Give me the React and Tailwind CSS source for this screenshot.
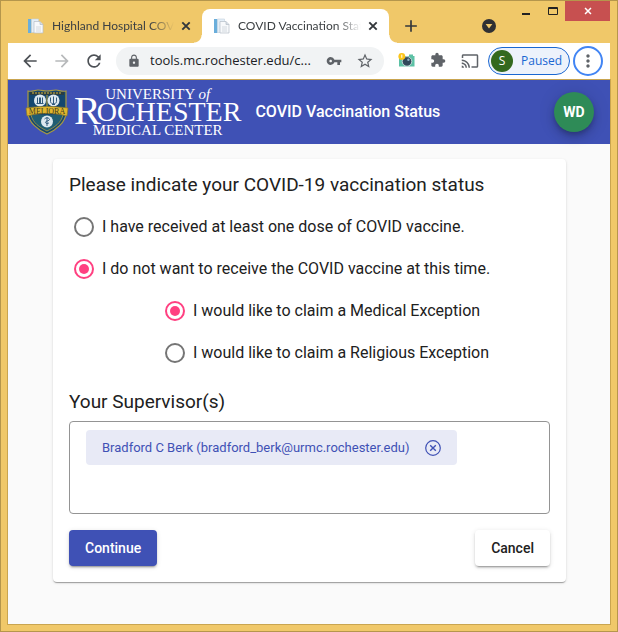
import { useState } from 'react';
import { MdArrowBack, MdArrowForward, MdRefresh, MdLock, MdVpnKey, MdStarBorder, MdExtension, MdCast, MdMoreVert, MdAdd } from 'react-icons/md';

const TABS = [
  { id: 'highland', title: 'Highland Hospital COVID Vaccine' },
  { id: 'status', title: 'COVID Vaccination Status' },
];

function PageIcon() {
  return (
    <svg viewBox="0 0 16 16" className="w-4 h-4 mr-2 shrink-0" aria-hidden="true">
      <rect x="0" y="1" width="3.5" height="14" fill="#6aaedb" />
      <path d="M3.5 1h7v13.5h-7z" fill="#e4eef7" stroke="#c3d1de" strokeWidth=".6" />
      <path d="M6 3.5h6l3 3V15H6z" fill="#f7f9fb" stroke="#b4bdc7" strokeWidth=".7" />
      <path d="M12 3.5v3h3" fill="#d6dde4" stroke="#b4bdc7" strokeWidth=".7" />
      <path d="M8 9h5M8 11h5M8 13h5" stroke="#c3ccd4" strokeWidth=".7" />
    </svg>
  );
}

function CloseGlyph({ className }) {
  return (
    <svg viewBox="0 0 10 10" className={className} aria-hidden="true">
      <path d="M1.3 1.3l7.4 7.4M8.7 1.3L1.3 8.7" stroke="currentColor" strokeWidth="1.9" />
    </svg>
  );
}

function Tab({ title, active }) {
  return (
    <div className={active ? 'relative flex items-center w-[187px] pl-3 pr-2 bg-white rounded-t-lg' : 'relative flex items-center w-[186px] pl-3 pr-2'}>
      {active && (
        <>
          <span className="absolute -left-2 bottom-0 w-2 h-2 bg-[radial-gradient(circle_at_0_0,transparent_7px,white_8px)]" />
          <span className="absolute -right-2 bottom-0 w-2 h-2 bg-[radial-gradient(circle_at_100%_0,transparent_7px,white_8px)]" />
        </>
      )}
      <PageIcon />
      <span className="flex-1 overflow-hidden whitespace-nowrap font-['Lato',sans-serif] text-xs text-[#3c4043] [mask-image:linear-gradient(to_right,black_80%,transparent)]">{title}</span>
      <button aria-label={`Close ${title}`} className="ml-1 w-4 h-4 flex items-center justify-center text-[#33373b]">
        <CloseGlyph className="w-[10px] h-[10px]" />
      </button>
    </div>
  );
}

function TitleBar() {
  return (
    <div className="flex h-[42px]">
      <div className="flex ml-2 pt-2">
        {TABS.map((t) => <Tab key={t.id} title={t.title} active={t.id === 'status'} />)}
        <button aria-label="New tab" className="ml-3 w-5 flex items-center justify-center text-[#33373b]">
          <MdAdd className="w-5 h-5" />
        </button>
      </div>
      <div className="flex-1 flex items-center justify-end pt-2 pr-[25px]">
        <button aria-label="Search tabs" className="w-[14px] h-[14px] rounded-full bg-[#2f3033] flex items-center justify-center">
          <svg viewBox="0 0 8 8" className="w-2 h-2" aria-hidden="true"><path d="M.6 2h6.8L4 6.4z" fill="#f0c869" /></svg>
        </button>
      </div>
      <div className="flex items-start text-[#222]">
        <button aria-label="Minimize" className="w-3 h-5 flex items-center justify-center">
          <svg viewBox="0 0 12 20" className="w-3 h-5" aria-hidden="true"><path d="M1 12h8v2H1z" fill="currentColor" /></svg>
        </button>
        <button aria-label="Maximize" className="w-8 h-5 flex items-center justify-center">
          <svg viewBox="0 0 32 20" className="w-8 h-5" aria-hidden="true"><path d="M15.5 6.5h9v7h-9z M15 7.5h10" fill="none" stroke="currentColor" /></svg>
        </button>
        <button aria-label="Close window" className="w-[45px] h-5 bg-[#c75050] text-white flex items-center justify-center">
          <CloseGlyph className="w-2 h-2" />
        </button>
      </div>
    </div>
  );
}

function CameraIcon() {
  return (
    <svg viewBox="0 0 17 16" className="w-[17px] h-4" aria-hidden="true">
      <rect x="1" y="4" width="15.5" height="10.5" fill="#5cc1a5" />
      <rect x="11" y="2.5" width="4" height="2" fill="#5cc1a5" />
      <circle cx="9" cy="9.4" r="4.8" fill="#31485a" stroke="#dfe8ea" strokeWidth=".8" />
      <circle cx="10.4" cy="7.8" r="1.2" fill="#8fb3c4" />
      <circle cx="3.8" cy="4.4" r="3.4" fill="#fcc419" />
      <path d="M3.8 2.6v3.2" stroke="#fff" strokeWidth="1" />
    </svg>
  );
}

function Toolbar() {
  return (
    <div className="flex items-center h-[37px] pl-[6px] pr-[7px] bg-white border-b border-[#d5d6d9] text-[#5f6368]">
      <button aria-label="Back" className="w-8 flex justify-center text-[#4d5156]"><MdArrowBack className="w-5 h-5" /></button>
      <button aria-label="Forward" className="w-8 flex justify-center text-[#b7b9bb]"><MdArrowForward className="w-5 h-5" /></button>
      <button aria-label="Reload" className="w-8 flex justify-center text-[#4d5156]"><MdRefresh className="w-5 h-5" /></button>
      <div className="flex-1 min-w-0 flex items-center h-7 ml-[6px] px-[10px] rounded-full bg-[#f1f3f4]">
        <MdLock className="w-4 h-[14px] shrink-0" />
        <input
          aria-label="Address"
          defaultValue="tools.mc.rochester.edu/c..."
          className="flex-1 min-w-0 ml-2 bg-transparent text-[13px] text-[#202124] focus:outline-none"
        />
        <button aria-label="Saved passwords"><MdVpnKey className="w-4 h-4" /></button>
        <button aria-label="Bookmark this page" className="ml-[14px]"><MdStarBorder className="w-[18px] h-[18px]" /></button>
      </div>
      <div className="flex ml-[6px]">
        <button aria-label="Camera extension" className="w-8 flex justify-center"><CameraIcon /></button>
        <button aria-label="Extensions" className="w-8 flex justify-center"><MdExtension className="w-4 h-4" /></button>
        <button aria-label="Cast" className="w-8 flex justify-center"><MdCast className="w-[18px] h-[18px]" /></button>
      </div>
      <button className="flex items-center w-[82px] h-7 ml-[2px] pl-[2px] rounded-full border border-[#1a67d2] bg-[#edf2fb] text-xs text-[#1a67d2]">
        <span className="w-[22px] h-[22px] rounded-full bg-[#33691e] text-white flex items-center justify-center">S</span>
        <span className="ml-2">Paused</span>
      </button>
      <button aria-label="Menu" className="w-[30px] h-[30px] ml-[3px] rounded-full border-2 border-[#4285f4] flex items-center justify-center">
        <MdMoreVert className="w-5 h-5" />
      </button>
    </div>
  );
}

function Crest() {
  return (
    <svg viewBox="0 0 44 46" className="w-11 h-[46px] shrink-0" aria-hidden="true">
      <path d="M3 2c4 1 7-1 10-1 4 0 6 1 9 1s5-1 9-1c3 0 6 2 10 1v22c0 9-10 17-19 21C13 41 3 33 3 24z" fill="#14476f" stroke="#a99a42" strokeWidth="1.2" />
      <path d="M5 3h34v3H5z" fill="#293d42" />
      <path d="M7 4h30" stroke="#d6b83d" strokeWidth="1" strokeDasharray="2 1" />
      <path d="M22 6v12" stroke="#bda43c" />
      <path d="M6 26c2 8 8 12 16 16 8-4 14-8 16-16" fill="#205d72" stroke="#a99a42" strokeWidth=".8" />
      <circle cx="15" cy="11.5" r="6" fill="#dce8ef" />
      <path d="M12.5 8.5v6h2v-6m1 0v6h2v-6M11.5 14.5h7" fill="none" stroke="#315b7d" />
      <circle cx="28.5" cy="11.5" r="6" fill="#dce8ef" />
      <path d="M25.5 8.5v4c0 3 6 3 6 0v-4M28.5 7.5v8M27 15.5h3" fill="none" stroke="#315b7d" />
      <path d="M1 19c14-2 28-2 42 0l-1 8-4-1c-10-2-22-2-32 0l-4 1z" fill="#e0b62e" stroke="#8b7929" strokeWidth=".7" />
      <text x="22" y="25" textAnchor="middle" fontSize="8" fill="#41401e" className="font-['Liberation_Serif',serif]">MELIORA</text>
      <circle cx="22" cy="32.5" r="6" fill="#dce8ef" />
      <path d="M22 28v9M19.5 30c2-2 5-1 5 .5s-4 1.2-4 2.8 3 1.5 3.5.4" fill="none" stroke="#315b7d" strokeWidth="1" />
    </svg>
  );
}

function Logo() {
  return (
    <div className="flex items-center">
      <Crest />
      <div className="ml-[5px] flex flex-col items-center text-white font-['Liberation_Serif',serif]">
        <div className="text-[15px] leading-4">UNIVERSITY <i>of</i></div>
        <div className="flex items-start h-5">
          <span className="text-[40px] leading-[18px]">R</span>
          <span className="-ml-1 text-[28px] leading-5">OCHESTER</span>
        </div>
        <div className="text-[15px] leading-4">MEDICAL CENTER</div>
      </div>
    </div>
  );
}

function RadioOption({ name, value, selected, onChange, children }) {
  return (
    <label className="flex items-center gap-2 h-[42px] text-base">
      <input
        type="radio"
        name={name}
        value={value}
        checked={selected === value}
        onChange={() => onChange(value)}
        className="appearance-none grid place-content-center w-5 h-5 shrink-0 rounded-full border-2 border-[#757575] checked:border-[#ff4081] checked:before:block checked:before:w-[10px] checked:before:h-[10px] checked:before:rounded-full checked:before:bg-[#ff4081]"
      />
      {children}
    </label>
  );
}

function StatusForm() {
  const [status, setStatus] = useState('declined');
  const [exception, setException] = useState('medical');
  const [supervisors, setSupervisors] = useState(['Bradford C Berk (bradford_berk@urmc.rochester.edu)']);

  return (
    <form
      onSubmit={(e) => e.preventDefault()}
      className="mt-[15px] ml-[45px] mr-11 p-4 bg-white rounded text-[#212121] shadow-[0_2px_1px_-1px_rgba(0,0,0,0.2),0_1px_1px_0_rgba(0,0,0,0.14),0_1px_3px_0_rgba(0,0,0,0.12)]"
    >
      <h2 className="text-[19px] leading-5 font-normal">Please indicate your COVID-19 vaccination status</h2>
      <div className="mt-[11px] pl-[5px]">
        <RadioOption name="status" value="received" selected={status} onChange={setStatus}>I have received at least one dose of COVID vaccine.</RadioOption>
        <RadioOption name="status" value="declined" selected={status} onChange={setStatus}>I do not want to receive the COVID vaccine at this time.</RadioOption>
      </div>
      {status === 'declined' && (
        <div className="pl-24">
          <RadioOption name="exception" value="medical" selected={exception} onChange={setException}>I would like to claim a Medical Exception</RadioOption>
          <RadioOption name="exception" value="religious" selected={exception} onChange={setException}>I would like to claim a Religious Exception</RadioOption>
        </div>
      )}

      <h2 className="mt-[18px] text-[19px] leading-5 font-normal">Your Supervisor(s)</h2>
      <div className="mt-[9px] min-h-[93px] px-4 py-2 border border-[#949494] rounded">
        {supervisors.map((s) => (
          <div key={s} className="flex items-center justify-between w-[371px] max-w-full h-[35px] px-4 rounded bg-[#e8eaf6] text-[13px] text-[#3f51b5]">
            {s}
            <button type="button" aria-label={`Remove ${s}`} onClick={() => setSupervisors(supervisors.filter((x) => x !== s))}>
              <svg viewBox="0 0 16 16" className="w-4 h-4" fill="none" stroke="currentColor" aria-hidden="true">
                <circle cx="8" cy="8" r="7.3" strokeWidth="1.2" />
                <path d="M5.2 5.2l5.6 5.6M10.8 5.2l-5.6 5.6" strokeWidth="1.4" />
              </svg>
            </button>
          </div>
        ))}
      </div>

      <div className="mt-4 flex justify-between text-sm font-medium">
        <button type="submit" className="h-9 px-4 rounded bg-[#3f51b5] text-white shadow-[0_3px_1px_-2px_rgba(0,0,0,0.2),0_2px_2px_0_rgba(0,0,0,0.14),0_1px_5px_0_rgba(0,0,0,0.12)]">Continue</button>
        <button type="button" className="h-9 px-4 rounded bg-white shadow-[0_3px_1px_-2px_rgba(0,0,0,0.2),0_2px_2px_0_rgba(0,0,0,0.14),0_1px_5px_0_rgba(0,0,0,0.12)]">Cancel</button>
      </div>
    </form>
  );
}

export default function App() {
  return (
    <div className="min-h-screen flex flex-col px-[7px] pb-[7px] bg-[#f0c869] border border-[#b5964c] font-['Open_Sans',sans-serif]">
      <TitleBar />
      <Toolbar />
      <main className="flex-1 pb-10 bg-[#fafafa] shadow-[0_0_0_1px_#c9a550] font-['Roboto',sans-serif]">
        <header className="h-16 pl-[17px] pr-4 flex items-center bg-[#3f51b5] text-white">
          <Logo />
          <h1 className="ml-[14px] text-base font-medium">COVID Vaccination Status</h1>
          <button className="ml-auto w-10 h-10 rounded-full bg-[#2e8b57] text-sm font-bold shadow-[0_3px_5px_-1px_rgba(0,0,0,0.2),0_6px_10px_0_rgba(0,0,0,0.14),0_1px_18px_0_rgba(0,0,0,0.12)]">WD</button>
        </header>
        <StatusForm />
      </main>
    </div>
  );
}
